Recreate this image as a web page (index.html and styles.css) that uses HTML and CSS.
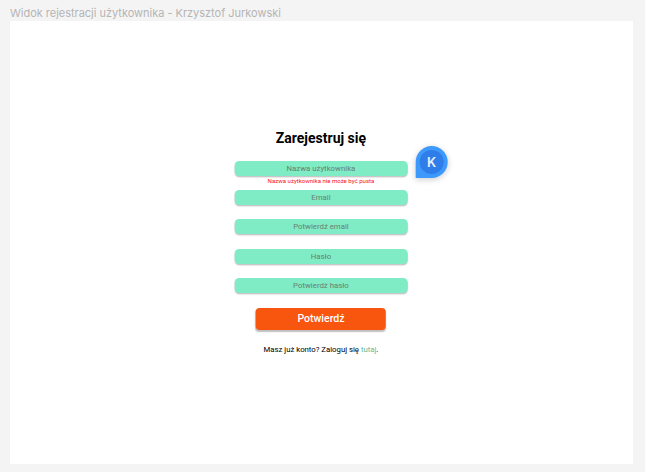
FILE: index.html
```html
<!DOCTYPE html>
<html lang="pl">
<head>
<meta charset="utf-8">
<title>Widok rejestracji użytkownika</title>
<link rel="stylesheet" href="styles.css">
</head>
<body>
<div class="frame-label"><span>Widok rejestracji użytkownika - Krzysztof Jurkowski</span></div>
<main class="frame">
  <form class="form">
    <h1 class="title"><span>Zarejestruj się</span></h1>
    <div class="row">
      <div class="field">Nazwa użytkownika</div>
      <div class="error"><span>Nazwa użytkownika nie może być pusta</span></div>
      <div class="pin"><span class="avatar">K</span></div>
    </div>
    <div class="row"><div class="field">Email</div></div>
    <div class="row"><div class="field">Potwierdź email</div></div>
    <div class="row"><div class="field">Hasło</div></div>
    <div class="row"><div class="field">Potwierdź hasło</div></div>
    <button class="submit" type="button">Potwierdź</button>
    <p class="login">Masz już konto? Zaloguj się <a class="link">tutaj</a>.</p>
  </form>
</main>
</body>
</html>
```
FILE: styles.css
```css
* { box-sizing: border-box; }
body {
  margin: 0;
  height: 472px;
  padding: 5px 12.5px 0 10px;
  background: #f4f4f4;
  font-family: Roboto, "Liberation Sans", sans-serif;
  overflow: hidden;
}
.frame-label {
  height: 16px;
  font: 11px/16px Inter, sans-serif;
  letter-spacing: -0.02px;
  color: #b5b5b5;
  white-space: nowrap;
}
.frame {
  height: 442.5px;
  padding-top: 106.5px;
  background: #fff;
}
.form {
  display: flex;
  flex-direction: column;
  align-items: center;
  width: 173px;
  margin: 0 auto;
  transform: translateX(-0.3px);
}
.title {
  margin: 0 0 13px;
  font-size: 14px;
  line-height: 20px;
  font-weight: 700;
  color: #000;
  white-space: nowrap;
}
.row {
  position: relative;
  width: 173px;
  height: 29.4px;
}
.field {
  height: 15px;
  border-radius: 4.5px;
  background: #7fecc5;
  box-shadow: 0 1.3px 1.3px rgba(0, 0, 0, 0.25);
  color: #68806f;
  font-size: 7.8px;
  line-height: 15.6px;
  text-align: center;
}
.error {
  color: #fb1220;
  font-size: 6.05px;
  line-height: 9px;
  text-align: center;
  white-space: nowrap;
}
.pin {
  position: absolute;
  left: 180.8px;
  top: -15px;
  display: grid;
  place-items: center;
  width: 32.5px;
  height: 32.5px;
  border-radius: 50% 50% 50% 0;
  background: #3d99fc;
  box-shadow: 0 1.5px 6px rgba(0, 0, 0, 0.2);
}
.avatar {
  width: 24px;
  height: 24px;
  border-radius: 50%;
  background: #2e7de9;
  color: #e8f2ff;
  font: 600 13px/24px Inter, sans-serif;
  text-align: center;
}
.submit {
  width: 130px;
  height: 21.5px;
  margin-top: 0.7px;
  padding: 0;
  border: 0;
  border-radius: 4px;
  background: #f8550f;
  box-shadow: 0 1.3px 1.3px rgba(0, 0, 0, 0.25);
  color: #fff;
  font: 500 10.5px/21.5px Roboto, sans-serif;
}
.login {
  margin: 14.5px 0 0;
  font-size: 7.78px;
  line-height: 12px;
  color: #000;
  white-space: nowrap;
}
.link { color: #63b99a; }
```
